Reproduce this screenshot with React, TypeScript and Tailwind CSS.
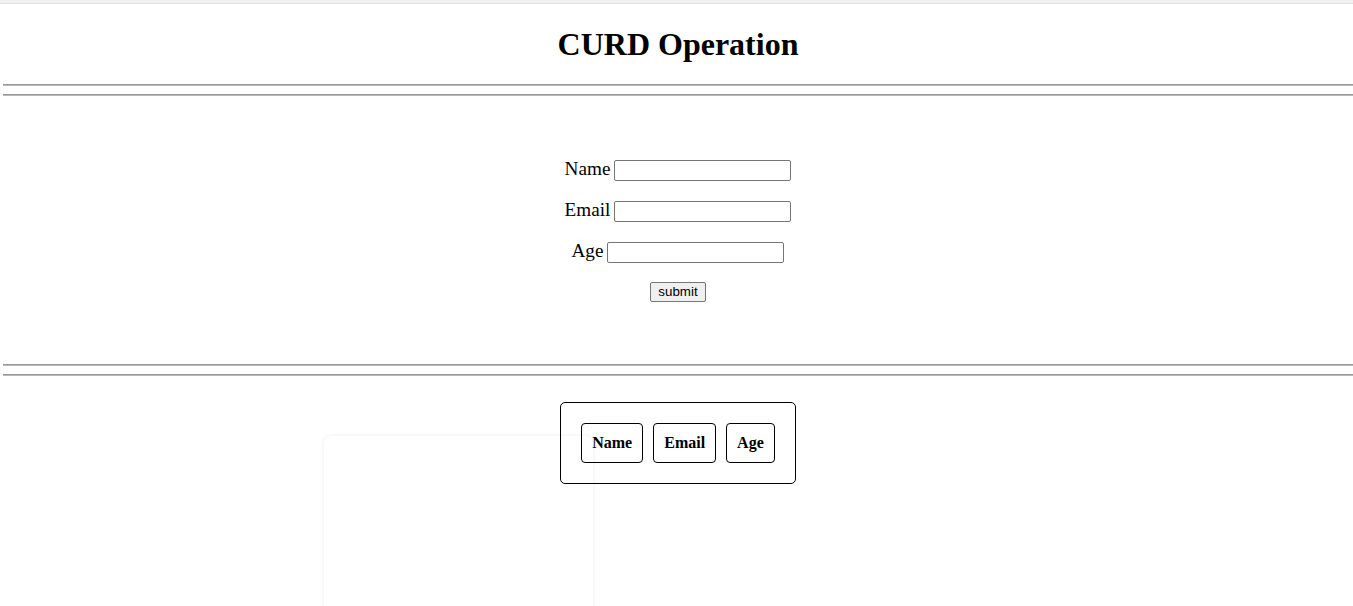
import React, { useState } from 'react';

// Una línea separadora al estilo del <hr> del navegador
const Linea = () => (
  <div className="h-[2px] border-t border-t-[#9a9a9a] border-b border-b-[#b8b8b8]" />
);

const DobleLinea = () => (
  <div className="flex flex-col gap-[8px]">
    <Linea />
    <Linea />
  </div>
);

// Fila del formulario: etiqueta + campo
const Campo = ({ etiqueta, valor, onChange }: { etiqueta: string; valor: string; onChange: (v: string) => void }) => (
  <div className="h-[41px] flex items-center justify-center gap-[4px]">
    <label className="text-[19.2px] leading-none relative -top-[1.5px]">{etiqueta}</label>
    <input
      value={valor}
      onChange={(e) => onChange(e.target.value)}
      className="w-[177px] h-[21px] border border-[#767676] rounded-[2px] bg-white px-[2px] text-[13.33px] outline-none"
    />
  </div>
);

export default function App() {
  const [nombre, setNombre] = useState('');
  const [email, setEmail] = useState('');
  const [edad, setEdad] = useState('');

  return (
    <div className="relative min-h-[606px] bg-white text-black font-['Liberation_Serif',serif] overflow-hidden">
      {/* franja superior */}
      <div className="h-[4px] bg-[#f0f0f0] border-b border-[#e2e2e2]" />

      <div className="pl-[3px]">
        <div className="h-[80px] flex items-center justify-center">
          <h1 className="text-[32px] font-bold leading-none">CURD Operation</h1>
        </div>

        <DobleLinea />

        <form className="pt-[54px] pb-[54px]" onSubmit={(e) => e.preventDefault()}>
          <Campo etiqueta="Name" valor={nombre} onChange={setNombre} />
          <Campo etiqueta="Email" valor={email} onChange={setEmail} />
          <Campo etiqueta="Age" valor={edad} onChange={setEdad} />
          <div className="h-[37px] flex items-center justify-center">
            <button
              type="submit"
              className="h-[20px] px-[7px] bg-[#efefef] border border-[#767676] rounded-[2px] font-['Liberation_Sans',sans-serif] text-[13.33px] leading-none"
            >
              submit
            </button>
          </div>
        </form>

        <DobleLinea />

        <div className="relative pt-[26px] flex justify-center">
          {/* tarjeta vacía detrás de la tabla */}
          <div className="absolute left-[321px] top-[60px] w-[269px] h-[300px] rounded-[8px] bg-white shadow-[0_0_5px_rgba(0,0,0,0.08)]" />
          <div className="relative flex gap-[10px] p-[20px] border border-black rounded-[5px]">
            {['Name', 'Email', 'Age'].map((c) => (
              <div key={c} className="p-[10px] border border-black rounded-[4px] font-bold text-[16px] leading-[18px]">
                {c}
              </div>
            ))}
          </div>
        </div>
      </div>
    </div>
  );
}
